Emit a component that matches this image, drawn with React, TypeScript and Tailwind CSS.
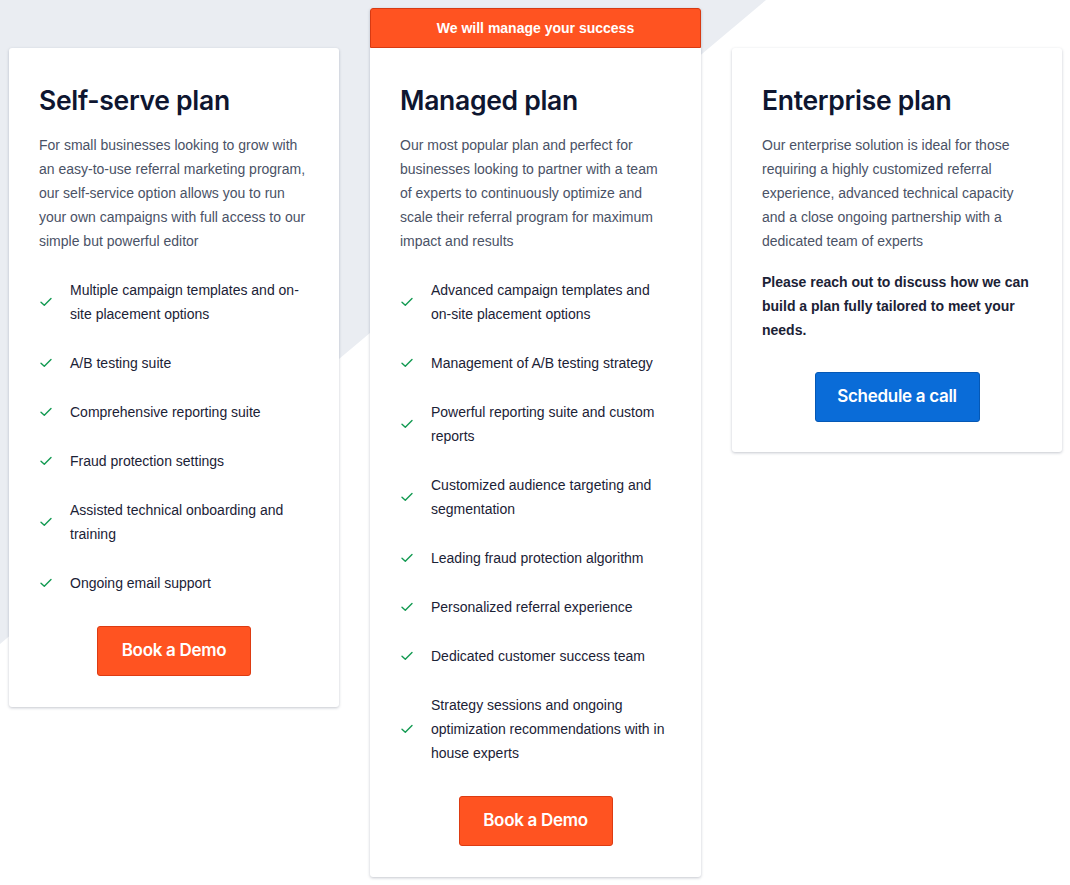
import React from "react";

const body = { fontFamily: "'Liberation Sans', Arial, sans-serif" };

const Check = () => (
  <svg width="12" height="10" viewBox="0 0 12 10" fill="none" className="shrink-0">
    <path d="M1 5.2L4.3 8.3L11 1.5" stroke="#139a52" strokeWidth="1.4" strokeLinecap="round" strokeLinejoin="round" />
  </svg>
);

const Item = ({ children }: { children: React.ReactNode }) => (
  <li className="flex items-center">
    <span className="w-[31px] shrink-0 pl-[1px] flex items-center">
      <Check />
    </span>
    <span className="text-[14px] leading-[24px] text-[#1b2236]" style={body}>{children}</span>
  </li>
);

const OrangeBtn = () => (
  <div className="flex justify-center">
    <button className="h-[50px] w-[154px] rounded-[3px] bg-[#ff5321] border border-[#dd3b12] text-white text-[17px] font-semibold tracking-[-0.3px]">
      Book a Demo
    </button>
  </div>
);

export default function App() {
  return (
    <div
      className="relative w-[1070px] h-[885px] bg-white overflow-hidden"
      style={{ fontFamily: "Inter, 'Noto Sans', sans-serif" }}
    >
      <div
        className="absolute inset-0 bg-[#eaedf2]"
        style={{ clipPath: "polygon(0 0, 766px 0, 0 644px)" }}
      />
      <div className="relative flex items-start gap-[31px] pl-[9px] pt-[8px]">
        {/* Self-serve */}
        <div className="mt-[40px] w-[330px] bg-white rounded-[3px] shadow-[0_1px_3px_rgba(20,30,60,0.25)] px-[30px] pt-[36px] pb-[31px]">
          <h2 className="text-[26.5px] leading-[32px] font-semibold text-[#0e1630] tracking-[-0.3px]">Self-serve plan</h2>
          <p className="mt-[17px] text-[14px] leading-[24px] text-[#4a5266]" style={body}>
            For small businesses looking to grow with an easy-to-use referral marketing program, our self-service option allows you to run your own campaigns with full access to our simple but powerful editor
          </p>
          <ul className="mt-[25px] flex flex-col gap-[25px]">
            <Item>Multiple campaign templates and on-site placement options</Item>
            <Item>A/B testing suite</Item>
            <Item>Comprehensive reporting suite</Item>
            <Item>Fraud protection settings</Item>
            <Item>Assisted technical onboarding and training</Item>
            <Item>Ongoing email support</Item>
          </ul>
          <div className="mt-[31px]">
            <OrangeBtn />
          </div>
        </div>

        {/* Managed */}
        <div className="w-[331px] bg-white rounded-[3px] shadow-[0_1px_3px_rgba(20,30,60,0.25)]">
          <div className="h-[40px] flex items-center justify-center bg-[#ff5321] border border-[#d73a12] rounded-t-[3px] text-white text-[14px] font-bold" style={body}>
            We will manage your success
          </div>
          <div className="px-[30px] pt-[36px] pb-[31px]">
            <h2 className="text-[26.5px] leading-[32px] font-semibold text-[#0e1630] tracking-[-0.3px]">Managed plan</h2>
            <p className="mt-[17px] text-[14px] leading-[24px] text-[#4a5266]" style={body}>
              Our most popular plan and perfect for businesses looking to partner with a team of experts to continuously optimize and scale their referral program for maximum impact and results
            </p>
            <ul className="mt-[25px] flex flex-col gap-[25px]">
              <Item>Advanced campaign templates and on-site placement options</Item>
              <Item>Management of A/B testing strategy</Item>
              <Item>Powerful reporting suite and custom reports</Item>
              <Item>Customized audience targeting and segmentation</Item>
              <Item>Leading fraud protection algorithm</Item>
              <Item>Personalized referral experience</Item>
              <Item>Dedicated customer success team</Item>
              <Item>Strategy sessions and ongoing optimization recommendations with in house experts</Item>
            </ul>
            <div className="mt-[31px]">
              <OrangeBtn />
            </div>
          </div>
        </div>

        {/* Enterprise */}
        <div className="mt-[40px] w-[330px] bg-white rounded-[3px] shadow-[0_1px_3px_rgba(20,30,60,0.25)] px-[30px] pt-[36px] pb-[30px]">
          <h2 className="text-[26.5px] leading-[32px] font-semibold text-[#0e1630] tracking-[-0.3px]">Enterprise plan</h2>
          <p className="mt-[17px] text-[14px] leading-[24px] text-[#4a5266]" style={body}>
            Our enterprise solution is ideal for those requiring a highly customized referral experience, advanced technical capacity and a close ongoing partnership with a dedicated team of experts
          </p>
          <p className="mt-[17px] text-[14px] leading-[24px] font-bold text-[#1b2236]" style={body}>
            Please reach out to discuss how we can build a plan fully tailored to meet your needs.
          </p>
          <div className="mt-[30px] flex justify-center">
            <button className="h-[50px] w-[165px] rounded-[3px] bg-[#0a6cd8] border border-[#0558b5] text-white text-[17px] font-semibold tracking-[-0.3px]">
              Schedule a call
            </button>
          </div>
        </div>
      </div>
    </div>
  );
}
